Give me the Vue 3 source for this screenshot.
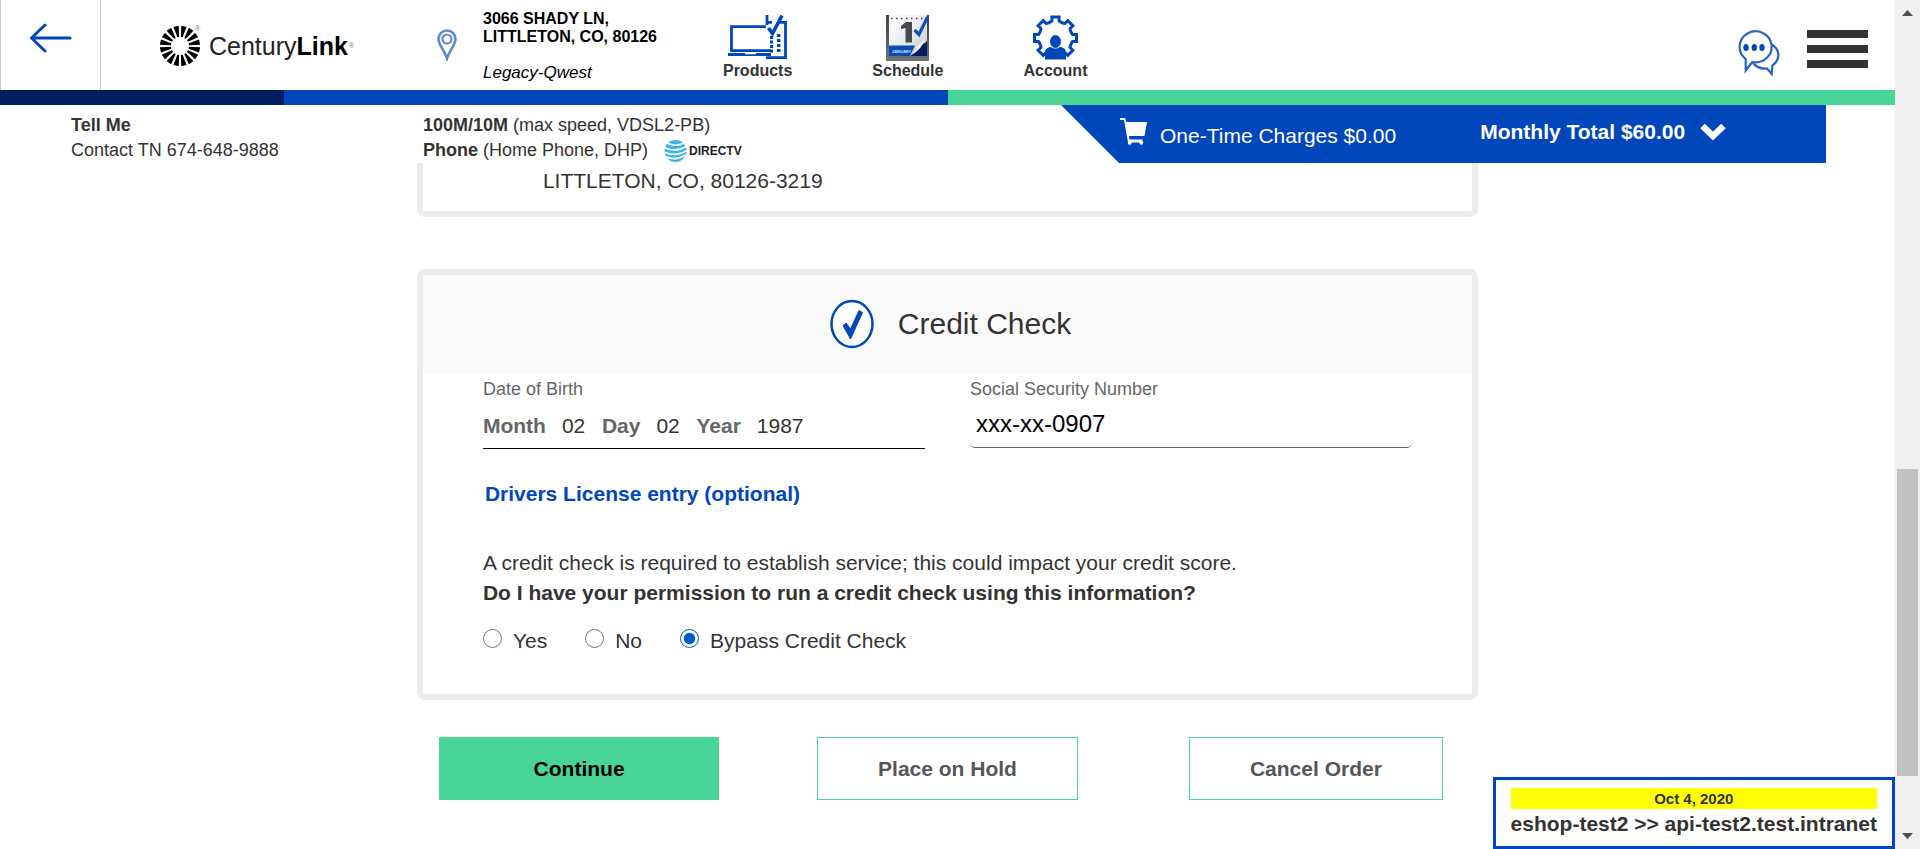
<script setup>
import { ref } from 'vue'

const consent = ref('bypass')
const consentOptions = [
  { value: 'yes', label: 'Yes' },
  { value: 'no', label: 'No' },
  { value: 'bypass', label: 'Bypass Credit Check' },
]
const month = ref('02')
const day = ref('02')
const year = ref('1987')
const ssn = ref('xxx-xx-0907')

const rays = Array.from({ length: 16 }, (_, i) => 11.25 + i * 22.5)

function toothPoints(deg, first, last) {
  const a = (deg * Math.PI) / 180
  const at = (r, t) =>
    `${(22.5 + r * Math.cos(a) - t * Math.sin(a)).toFixed(1)},${(22.5 + r * Math.sin(a) + t * Math.cos(a)).toFixed(1)}`
  const pts = [at(16, -5), at(17, -3.6), at(21, -3.6), at(21, 3.6), at(17, 3.6), at(16, 5)]
  if (first) return pts.slice(1)
  if (last) return pts.slice(0, 5)
  return pts
}
const gear = [135, 180, 225, 270, 315, 360, 405]
  .flatMap((d, i) => toothPoints(d, i === 0, i === 6))
  .join(' ')
</script>

<template>
  <div class="window">
    <div class="page">
      <header class="top">
        <button class="back" type="button" aria-label="Back">
          <svg width="44" height="30" viewBox="0 0 44 30" fill="none" stroke="#0047bb" stroke-width="3" stroke-linecap="round">
            <path d="M41 15H3M16 2L2.500 15L16 28" stroke-linejoin="round" />
          </svg>
        </button>
        <a class="logo" href="#" aria-label="CenturyLink">
          <svg width="200" height="50" viewBox="0 0 200 50">
            <g transform="translate(21 25)" fill="#000">
              <path v-for="r in rays" :key="r" :transform="`rotate(${r})`" d="M-0.900 -9L-2.700 -20H2.700L0.900 -9Z" />
            </g>
            <g font-family="Liberation Sans, Arial, sans-serif" fill="#222">
              <text x="50" y="34" font-size="25">Century<tspan font-weight="bold" fill="#000">Link</tspan></text>
              <text x="36" y="10" font-size="7" fill="#777">®</text>
              <text x="190" y="27" font-size="7" fill="#777">®</text>
            </g>
          </svg>
        </a>
        <svg class="pin" width="20" height="32" viewBox="0 0 20 32" fill="none" stroke="#6389ca">
          <path d="M10 29.500C8 22 1.500 16 1.500 10A8.500 8.500 0 0 1 18.500 10C18.500 16 12 22 10 29.500Z" stroke-width="2.600" />
          <circle cx="10" cy="10" r="4.500" stroke-width="2.200" />
        </svg>
        <address class="address">
          <strong>3066 SHADY LN,<br />LITTLETON, CO, 80126</strong>
          <em>Legacy-Qwest</em>
        </address>
        <nav class="nav">
          <a href="#">
            <svg width="60" height="48" viewBox="0 0 60 48" fill="none" stroke="#0047bb">
              <path d="M38 12.700H3.500V36.700H43" stroke-width="2.800" />
              <path d="M0 40.500H43" stroke-width="3" />
              <path d="M17 39.500H28" stroke="#fff" stroke-width="1.500" />
              <path d="M39 1V11M39 8.300H44M51 8.300H57.500V43.700H38" stroke-width="2.800" />
              <path d="M43.500 22V39" stroke-width="3" stroke-dasharray="3 1.500" />
              <path d="M50.700 20V38" stroke-width="3.500" stroke-dasharray="3 2" />
              <path d="M40.500 14L44.500 19.500L54 1.500" stroke-width="3.600" />
            </svg>
            Products
          </a>
          <a href="#">
            <svg width="43" height="48" viewBox="0 0 43 48">
              <defs>
                <linearGradient id="frame" x1="0" y1="0" x2="0" y2="1">
                  <stop offset="0" stop-color="#3c3f44" /><stop offset="1" stop-color="#6f7275" />
                </linearGradient>
                <linearGradient id="paper" x1="0" y1="0" x2="1" y2="1">
                  <stop offset="0" stop-color="#fff" /><stop offset="0.600" stop-color="#e6e7e9" /><stop offset="1" stop-color="#bbb" />
                </linearGradient>
              </defs>
              <rect width="43" height="46" y="1" fill="url(#frame)" />
              <path d="M3 1H41V42H3Z" fill="url(#paper)" />
              <path d="M5 4.500H39" stroke="#444" stroke-width="1.500" stroke-dasharray="1.500 3.500" />
              <path d="M3 31.500H29L24 42H3Z" fill="#0b49b5" />
              <path d="M41 27V42H24Q29 39 30 32Q38 31 41 27Z" fill="#001f60" />
              <path d="M30 32Q36 30 40 22Q37 35 24 42Q29 38 30 32Z" fill="#f4f4f4" />
              <path d="M15 12L20 8H26V28.500H19.500V14L15 15Z" fill="#46494e" />
              <text x="6" y="39" font-family="Liberation Sans, sans-serif" font-size="4" font-weight="bold" fill="#cfe0ff">JANUARY</text>
              <path d="M28.500 16L33 20.500L41.500 3" fill="none" stroke="#0f50c0" stroke-width="3.200" />
            </svg>
            Schedule
          </a>
          <a href="#">
            <svg width="45" height="48" viewBox="0 -1.500 45 48">
              <polyline :points="gear" fill="none" stroke="#0047bb" stroke-width="3" />
              <ellipse cx="22.500" cy="26" rx="5.500" ry="6.500" fill="#0047bb" />
              <path d="M12 44V37Q12 32 18 31.500Q22.500 34.500 27 31.500Q33 32 33 37V44Z" fill="#0047bb" />
            </svg>
            Account
          </a>
        </nav>
        <div class="tools">
          <button type="button" aria-label="Chat">
            <svg width="43" height="47" viewBox="0 0 43 47" fill="none" stroke="#2a63c4" stroke-width="2.200">
              <path d="M34 14C43 19 44 29 35.300 35.700L34.700 44L30 38.500C24 39 19 37 16 33" />
              <path d="M8.700 29A16 15.500 0 1 1 15.300 32L8.700 40.500Z" fill="#fff" />
              <g fill="#0047bb" stroke="none">
                <ellipse cx="9" cy="17.500" rx="2.700" ry="3.500" /><ellipse cx="17.300" cy="17.500" rx="2.700" ry="3.500" /><ellipse cx="25" cy="17.500" rx="2.700" ry="3.500" />
              </g>
            </svg>
          </button>
          <button class="menu" type="button" aria-label="Menu"><i></i><i></i><i></i></button>
        </div>
      </header>
      <div class="stripe"><i></i><i></i><i></i></div>

      <section class="summary">
        <p class="who"><b>Tell Me</b><br />Contact TN 674-648-9888</p>
        <div class="plan">
          <p><b>100M/10M</b> (max speed, VDSL2-PB)</p>
          <p class="phone">
            <span><b>Phone</b> (Home Phone, DHP)</span>
            <svg width="84" height="24" viewBox="0 0 84 24" role="img" aria-label="AT&amp;T DIRECTV">
              <circle cx="11.500" cy="12" r="11" fill="#3db2ea" />
              <g fill="none" stroke="#fff" stroke-width="1.600">
                <path d="M3 4Q11.500 8.500 20 4M0 8.500Q11.500 14 22 7.500M0 13Q11.500 18.500 23 11.500M1 17.500Q11.500 22.500 21.500 16" />
              </g>
              <text x="25" y="16" font-family="Liberation Sans, sans-serif" font-size="12" font-weight="bold" fill="#222">DIRECTV</text>
            </svg>
          </p>
        </div>
        <div class="totals">
          <svg class="cart" width="28" height="28" viewBox="0 0 28 28" fill="#fff">
            <path d="M0 0H5L6.500 4H27L24.500 18H9L9.500 21.500H22.500V23H22A1.900 1.900 0 1 1 19.500 24.500H11.500A1.800 1.800 0 1 1 8 24.500L4 2H0Z" />
          </svg>
          <span class="once">One-Time Charges $0.00</span>
          <button class="monthly" type="button">
            Monthly Total $60.00
            <svg width="26" height="18" viewBox="0 0 26 18" fill="none" stroke="#fff" stroke-width="6.500"><path d="M2.500 3L13 13L23.500 3" /></svg>
          </button>
        </div>
      </section>

      <main class="content">
        <section class="card shipping">LITTLETON, CO, 80126-3219</section>

        <section class="card credit">
          <h2>
            <svg width="44" height="50" viewBox="0 0 44 50">
              <ellipse cx="22" cy="25" rx="20.500" ry="23" fill="#fff" stroke="#0047bb" stroke-width="2.500" />
              <path d="M13 26.500L16 24L20.500 30L29 11.500L32.500 13.500L20.500 40Z" fill="#0047bb" stroke="#0047bb" stroke-linejoin="round" />
            </svg>
            Credit Check
          </h2>
          <form class="form" @submit.prevent>
            <div class="fields">
              <fieldset>
                <legend>Date of Birth</legend>
                <div class="dob">
                  <label for="month">Month</label><input id="month" v-model="month" />
                  <label for="day">Day</label><input id="day" v-model="day" />
                  <label for="year">Year</label><input id="year" v-model="year" class="wide" />
                </div>
              </fieldset>
              <div>
                <label class="caption" for="ssn">Social Security Number</label>
                <input id="ssn" v-model="ssn" class="ssn" />
              </div>
            </div>
            <a class="license" href="#">Drivers License entry (optional)</a>
            <p>A credit check is required to establish service; this could impact your credit score.</p>
            <p><b>Do I have your permission to run a credit check using this information?</b></p>
            <div class="choices">
              <label v-for="o in consentOptions" :key="o.value">
                <input v-model="consent" type="radio" name="consent" :value="o.value" />{{ o.label }}
              </label>
            </div>
          </form>
        </section>

        <div class="actions">
          <button class="primary" type="button">Continue</button>
          <button type="button">Place on Hold</button>
          <button type="button">Cancel Order</button>
        </div>
      </main>

      <aside class="env">
        <div class="date">Oct 4, 2020</div>
        <div>eshop-test2 &gt;&gt; api-test2.test.intranet</div>
      </aside>
    </div>

    <div class="scrollbar" aria-hidden="true">
      <svg width="11" height="6" viewBox="0 0 11 6"><path d="M0 6L5.500 0L11 6Z" fill="#505050" /></svg>
      <div class="track"><div class="thumb"></div></div>
      <svg width="11" height="6" viewBox="0 0 11 6"><path d="M0 0L5.500 6L11 0Z" fill="#505050" /></svg>
    </div>
  </div>
</template>

<style>
body {
  margin: 0;
}
</style>

<style scoped>
* {
  box-sizing: border-box;
}
.window {
  display: flex;
  height: 100vh;
  overflow: hidden;
  background: #fff;
  color: #333;
  font: 21px/30px "Liberation Sans", Arial, sans-serif;
}
.page {
  position: relative;
  flex: 1;
  min-width: 0;
}
p,
h2 {
  margin: 0;
}
svg {
  display: block;
  flex: none;
}
a {
  color: inherit;
  text-decoration: none;
}
button,
input {
  font: inherit;
  color: inherit;
  margin: 0;
  padding: 0;
  border: 0;
  background: none;
}

.top {
  display: flex;
  height: 90px;
}
.back {
  width: 101px;
  padding: 23px 0 0 28px;
  border: solid #ccc;
  border-width: 0 1px;
  display: flex;
}
.logo {
  margin: 21px 0 0 58px;
}
.pin {
  margin: 29px 0 0 78px;
}
.address {
  margin: 10px 0 0 26px;
  color: #000;
  font-size: 17px;
  line-height: 18px;
  font-style: normal;
}
.address strong {
  font-size: 16px;
  white-space: nowrap;
}
.address em {
  display: block;
  margin-top: 18px;
}
.nav {
  display: flex;
  gap: 80px;
  margin: 14px 0 0 66px;
  font-size: 16px;
  line-height: 18px;
  font-weight: bold;
}
.nav a {
  display: flex;
  flex-direction: column;
  align-items: center;
}
.tools {
  display: flex;
  gap: 27px;
  align-items: flex-start;
  margin: 30px 27px 0 auto;
}
.menu {
  display: grid;
  gap: 7px;
  width: 61px;
}
.menu i {
  height: 8px;
  background: #333;
}
.stripe {
  display: grid;
  grid-template-columns: 15% 35% 1fr;
  height: 15px;
}
.stripe i {
  background: #001e60;
}
.stripe i:nth-child(2) {
  background: #0047bb;
}
.stripe i:nth-child(3) {
  background: #48d597;
}

.summary {
  display: flex;
  height: 58px;
  font-size: 18px;
  line-height: 25px;
}
.who {
  width: 352px;
  margin: 8px 0 0 71px;
}
.plan {
  margin-top: 8px;
}
.phone {
  display: flex;
  align-items: center;
  gap: 16px;
}
.totals {
  display: flex;
  width: 765px;
  margin-left: auto;
  margin-right: 69px;
  padding-left: 59px;
  background: #0047bb;
  clip-path: polygon(0 0, 100% 0, 100% 100%, 58px 100%);
  color: #fff;
  font-size: 21px;
}
.cart {
  margin-top: 13px;
}
.once {
  margin: 18px 0 0 12px;
}
.monthly {
  display: flex;
  align-items: center;
  gap: 15px;
  height: 25px;
  margin: 14px 0 0 84px;
  font-weight: bold;
}

.content {
  width: 56%;
  margin: 0 auto;
}
.card {
  border: 6px solid #ececec;
  border-radius: 8px;
}
.shipping {
  padding: 3px 0 15px 120px;
  border-top: 0;
  border-radius: 0 0 8px 8px;
  margin-bottom: 52px;
}
.credit h2 {
  display: flex;
  align-items: center;
  justify-content: center;
  gap: 24px;
  height: 98px;
  padding-left: 6px;
  background: #fafafa;
  font-size: 30px;
  font-weight: normal;
}
.form {
  padding: 4px 60px 38px;
}
.fields {
  display: grid;
  grid-template-columns: 1fr 1fr;
  align-items: start;
  gap: 45px;
}
fieldset {
  min-width: 0;
  margin: 0;
  padding: 0;
  border: 0;
}
legend,
.caption {
  display: block;
  padding: 0;
  color: #666;
  font-size: 18px;
  line-height: 24px;
}
.dob {
  display: flex;
  gap: 16px;
  height: 48px;
  padding-top: 10px;
  border-bottom: 1px solid #000;
}
.dob label {
  font-weight: bold;
  color: #666;
}
.dob input {
  width: 24px;
  height: 30px;
}
.dob .wide {
  width: 60px;
}
.ssn {
  display: block;
  width: 100%;
  height: 47px;
  padding: 0 6px;
  border-bottom: 1px solid #666;
  border-radius: 5px;
  color: #000;
  font-size: 24px;
}
.license {
  display: block;
  margin: 30px 0 39px 2px;
  color: #0047bb;
  font-weight: bold;
}
.choices {
  display: flex;
  gap: 38px;
  margin-top: 18px;
}
.choices label {
  display: flex;
  gap: 11px;
}
.choices input {
  width: 19px;
  height: 19px;
  margin-top: 3px;
  accent-color: #005ccc;
}

.actions {
  display: grid;
  grid-template-columns: repeat(3, 1fr);
  justify-items: center;
  margin: 37px -22px 0;
}
.actions button {
  height: 63px;
  padding: 0 60px;
  border: 1px solid #48d597;
  color: #53565a;
  font-weight: bold;
}
.actions .primary {
  min-width: 280px;
  background: #48d597;
  color: #000;
}

.env {
  position: absolute;
  right: 0;
  bottom: 0;
  padding: 8px 15px 7px;
  border: 3px solid #0047bb;
  background: #fff;
  font-weight: bold;
}
.date {
  background: #ff0;
  font-size: 15px;
  line-height: 21px;
  text-align: center;
}

.scrollbar {
  display: flex;
  flex-direction: column;
  align-items: center;
  width: 25px;
  padding: 10px 0;
  background: #f0f0f0;
}
.track {
  display: grid;
  grid-template-rows: 453fr 307fr 57fr;
  flex: 1;
  width: 21px;
}
.thumb {
  grid-row: 2;
  background: #c1c1c1;
}
</style>
